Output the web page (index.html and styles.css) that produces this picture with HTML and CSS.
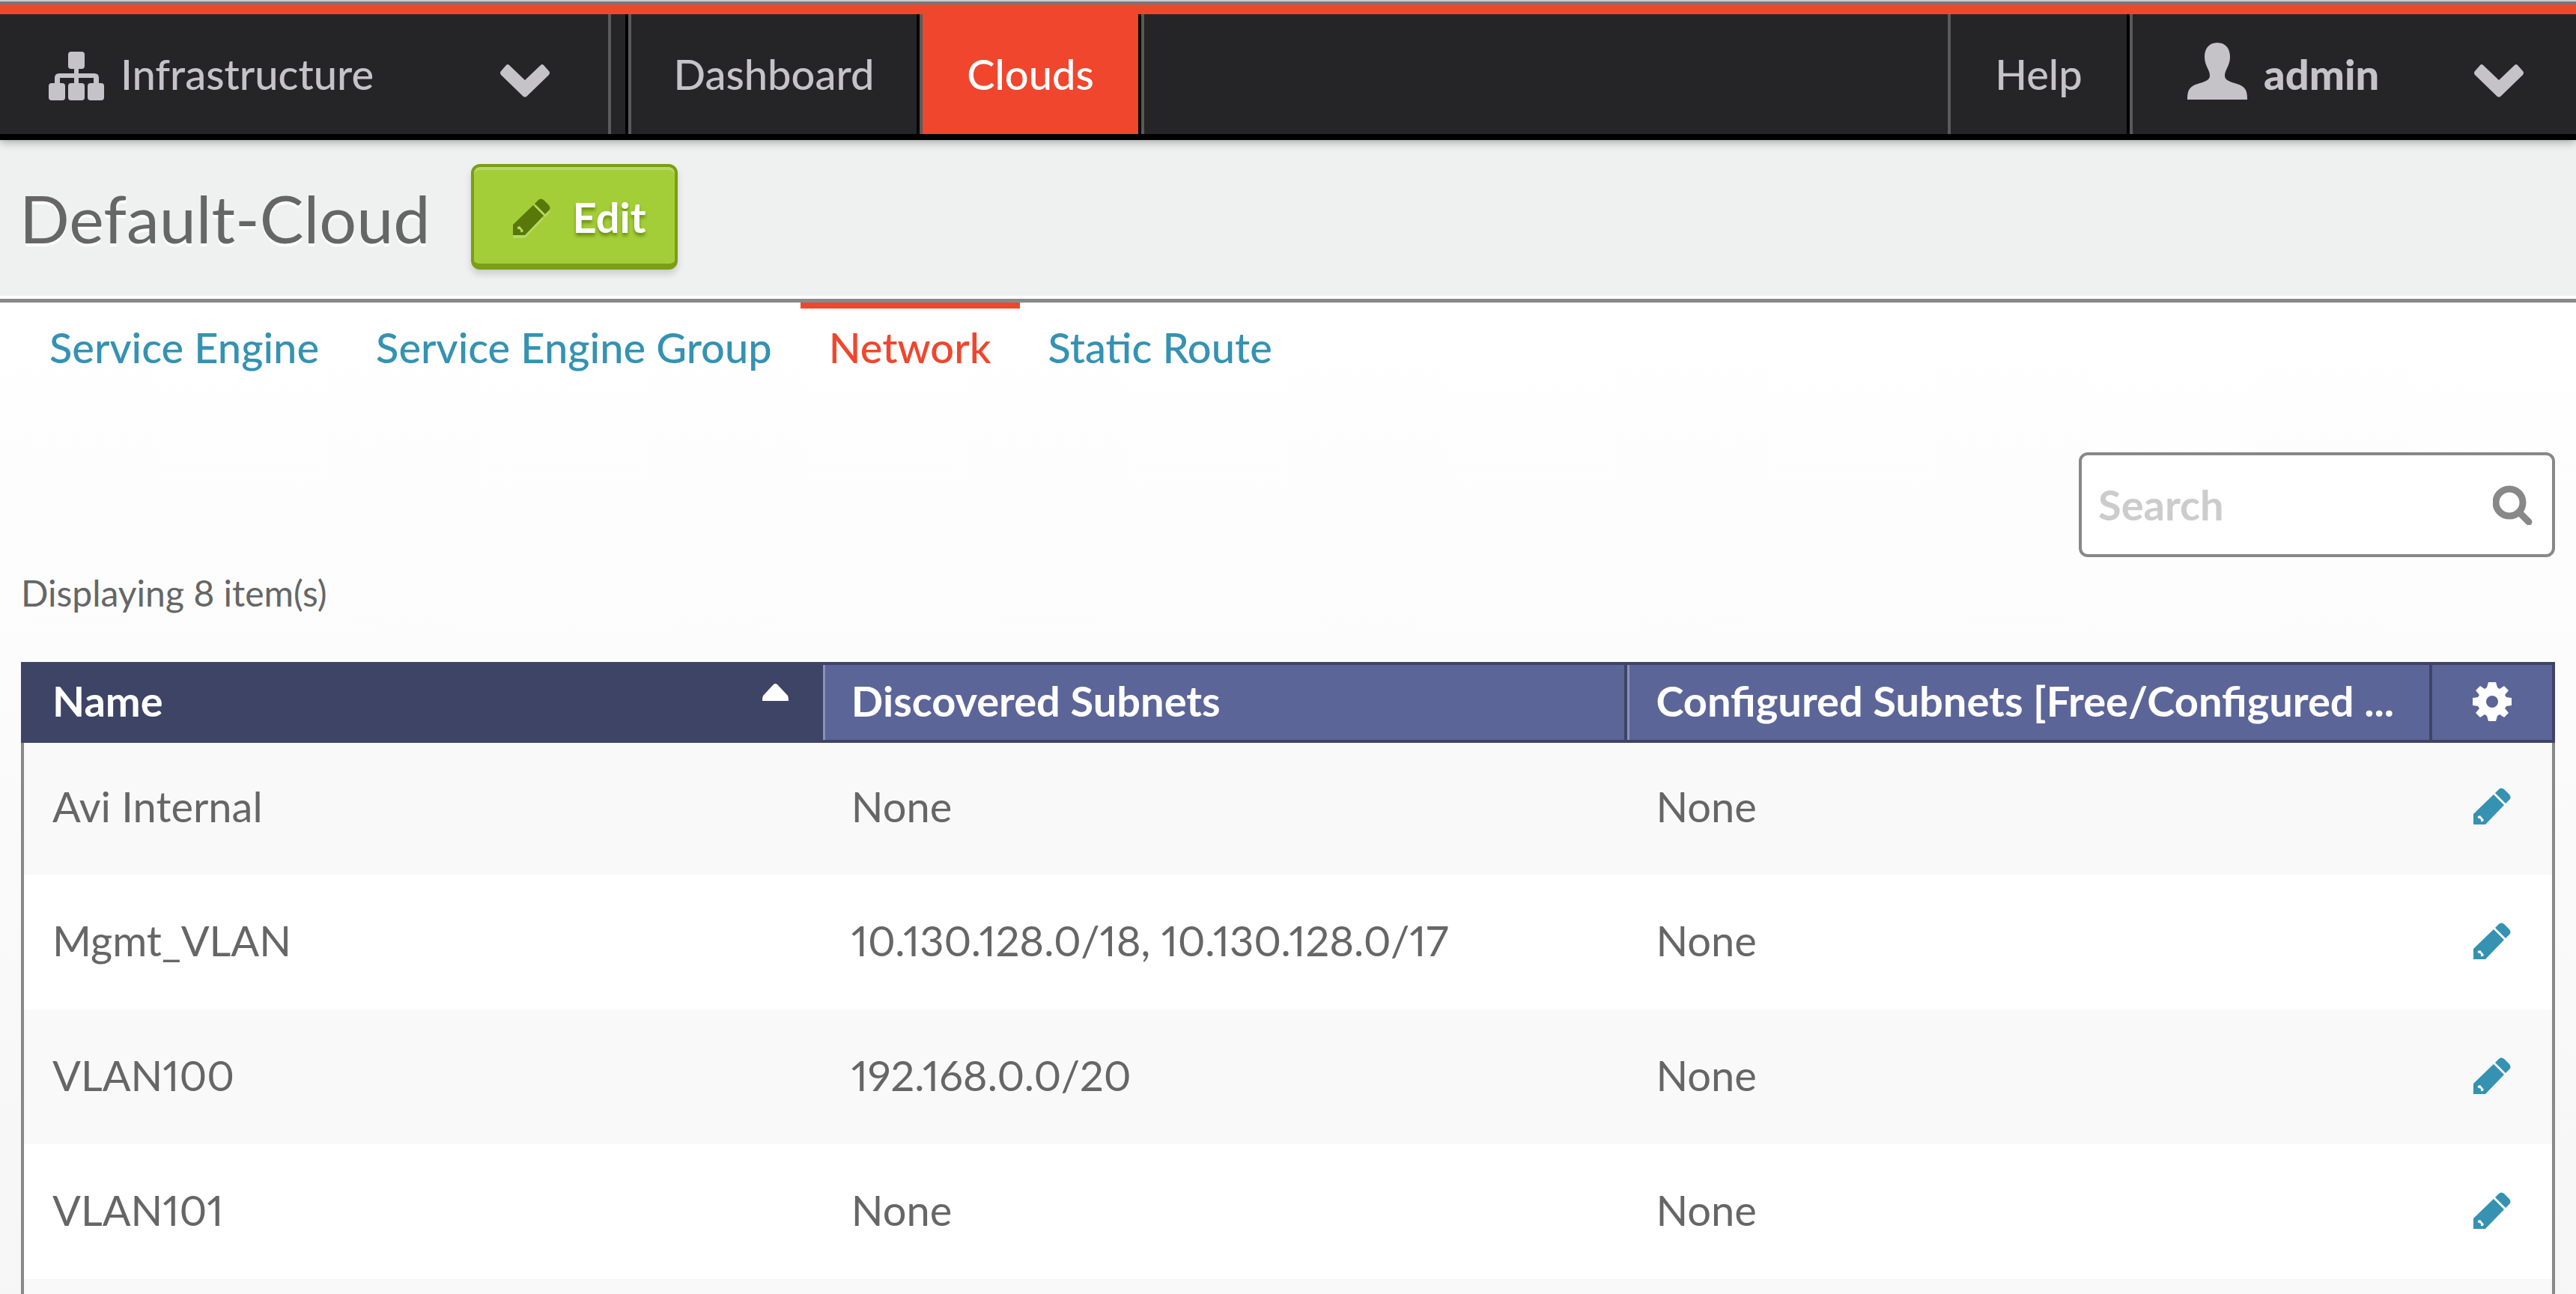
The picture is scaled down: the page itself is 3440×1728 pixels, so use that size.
FILE: index.html
```html
<!DOCTYPE html>
<html lang="en">
<head>
<meta charset="utf-8">
<title>Default-Cloud</title>
<link rel="stylesheet" href="styles.css">
</head>
<body>
<svg class="sprite" aria-hidden="true">
  <symbol id="chevron" viewBox="0 0 68 45"><path d="M2 10 L9 2 Q11 0 13 2 L34 22 L55 2 Q57 0 59 2 L66 10 Q68 12 66 15 L36 44 Q34 45 32 44 L2 15 Q0 12 2 10Z"/></symbol>
  <symbol id="pencil" viewBox="0 0 50 50"><path fill-rule="evenodd" d="M0 35 L27 9 L41 23 L16 49 H0Z M6 38 Q5 41 8 41 L10 42 V45 Q13 46 14 43 L9 37Z"/><path d="M29 7 L34 2 Q37 -1 41 2 L48 9 Q51 13 48 16 L43 21Z"/></symbol>
</svg>
<header class="topbar">
  <button class="section-menu" type="button">
    <svg class="icon-sitemap" viewBox="0 0 74 65" aria-hidden="true"><rect x="26" width="22" height="23" rx="4"/><rect y="42" width="22" height="23" rx="4"/><rect x="26" y="42" width="22" height="23" rx="4"/><rect x="52" y="42" width="22" height="23" rx="4"/><path d="M34 20h6v9h21q6 0 6 6v9h-7v-9H40v9h-6v-9H15v9H8v-9q0-6 6-6h20z"/></svg>
    <span>Infrastructure</span>
    <svg class="icon-chevron" aria-hidden="true"><use href="#chevron"/></svg>
  </button>
  <nav class="nav">
    <a class="nav-item dashboard" href="#">Dashboard</a>
    <a class="nav-item clouds active" href="#">Clouds</a>
  </nav>
  <a class="nav-item help" href="#">Help</a>
  <button class="user-menu" type="button">
    <svg class="icon-user" viewBox="0 0 80 76" aria-hidden="true"><path d="M40 0C52 0 57 9 57 19C57 31 50 36 50 44C50 53 65 53 73 58C79 62 80 67 80 76H0C0 67 1 62 7 58C15 53 30 53 30 44C30 36 23 31 23 19C23 9 28 0 40 0Z"/></svg>
    <span>admin</span>
    <svg class="icon-chevron" aria-hidden="true"><use href="#chevron"/></svg>
  </button>
</header>
<section class="page-head">
  <h1>Default-Cloud</h1>
  <button class="edit-button" type="button"><svg class="icon-pencil" aria-hidden="true"><use href="#pencil"/></svg>Edit</button>
</section>
<main class="content">
  <nav class="tabs">
    <a class="tab" href="#">Service Engine</a>
    <a class="tab" href="#">Service Engine Group</a>
    <a class="tab current" href="#">Network</a>
    <a class="tab" href="#">Static Route</a>
  </nav>
  <div class="tools">
    <label class="search">
      <input type="search" placeholder="Search" aria-label="Search">
      <svg class="icon-search" viewBox="0 0 53 53" aria-hidden="true"><circle cx="22" cy="23" r="18"/><path d="M35 36 L48 49"/></svg>
    </label>
  </div>
  <p class="count">Displaying 8 item(s)</p>
  <table class="grid">
    <colgroup><col class="col-name"><col><col><col class="col-action"></colgroup>
    <thead>
      <tr>
        <th class="sorted" scope="col"><div class="head-cell">Name<svg class="icon-sort" viewBox="0 0 35 24" aria-hidden="true"><path d="M15 2Q17 0 20 2L34 17Q35 19 35 24H0Q0 19 1 17Z"/></svg></div></th>
        <th scope="col">Discovered Subnets</th>
        <th scope="col">Configured Subnets [Free/Configured ...</th>
        <th class="action" scope="col"><button class="icon-button" type="button" aria-label="Table settings"><svg class="icon-gear" viewBox="-26 -26 52 52" aria-hidden="true"><path fill-rule="evenodd" d="M-5 -26H5L7 -19L10 -17L16 -21L22 -15L17 -9L19 -6L26 -5V5L19 6L17 9L22 15L16 21L10 17L7 19L5 26H-5L-7 19L-10 17L-16 21L-22 15L-17 9L-19 6L-26 5V-5L-19 -6L-17 -9L-22 -15L-16 -21L-10 -17L-7 -19Z M0 -8A8 8 0 1 0 0 8A8 8 0 1 0 0 -8Z"/></svg></button></th>
      </tr>
    </thead>
    <tbody>
      <tr><td>Avi Internal</td><td>None</td><td>None</td><td class="action"><button class="icon-button" type="button" aria-label="Edit"><svg class="icon-pencil" aria-hidden="true"><use href="#pencil"/></svg></button></td></tr>
      <tr><td>Mgmt_VLAN</td><td>10.130.128.0/18, 10.130.128.0/17</td><td>None</td><td class="action"><button class="icon-button" type="button" aria-label="Edit"><svg class="icon-pencil" aria-hidden="true"><use href="#pencil"/></svg></button></td></tr>
      <tr><td>VLAN100</td><td>192.168.0.0/20</td><td>None</td><td class="action"><button class="icon-button" type="button" aria-label="Edit"><svg class="icon-pencil" aria-hidden="true"><use href="#pencil"/></svg></button></td></tr>
      <tr><td>VLAN101</td><td>None</td><td>None</td><td class="action"><button class="icon-button" type="button" aria-label="Edit"><svg class="icon-pencil" aria-hidden="true"><use href="#pencil"/></svg></button></td></tr>
      <tr class="spacer"><td></td><td></td><td></td><td></td></tr>
    </tbody>
  </table>
</main>
</body>
</html>
```

FILE: styles.css
```css
* { box-sizing: border-box; }

body {
  margin: 0;
  font-family: Lato, "Liberation Sans", sans-serif;
  font-size: 56px;
  line-height: 68px;
  font-variant-numeric: proportional-nums;
  color: #666;
  background: #fff;
}

a { text-decoration: none; }

button {
  margin: 0;
  padding: 0;
  border: 0;
  background: none;
  font: inherit;
  color: inherit;
  cursor: pointer;
}

svg { display: block; flex: none; fill: currentColor; }
.sprite { position: absolute; width: 0; height: 0; }

/* Top bar */
.topbar {
  position: relative;
  display: flex;
  height: 187px;
  border-top: 19px solid #f0462e;
  border-bottom: 8px solid #000;
  background: #252527;
  color: #c5c3c8;
  font-weight: 500;
  box-shadow: 0 2px 12px rgba(0, 0, 0, .35);
}
.topbar::before {
  content: "";
  position: absolute;
  top: -19px;
  left: 0;
  right: 0;
  height: 4px;
  border-top: 2px solid #ccc;
  background: #777;
}
.section-menu {
  display: flex;
  align-items: center;
  width: 816px;
  padding: 0 77px 0 65px;
  border-right: 4px solid #5a5a5c;
}
.section-menu span,
.user-menu span { margin-left: 22px; }
.icon-chevron { width: 68px; height: 45px; margin: 16px 0 0 auto; }
.icon-sitemap { width: 74px; height: 65px; margin-top: 4px; }
.nav {
  display: flex;
  flex: 1;
  margin-left: 19px;
  border-left: 4px solid #000;
}
.nav::after { content: ""; border-left: 4px solid #5a5a5c; }
.nav-item {
  display: flex;
  align-items: center;
  justify-content: center;
  border-left: 4px solid #5a5a5c;
  border-right: 4px solid #000;
  color: inherit;
}
.dashboard { width: 389px; }
.clouds { width: 296px; }
.help { width: 243px; }
.nav-item.active { background: #f0462e; color: #fff; }
.user-menu {
  display: flex;
  align-items: center;
  width: 596px;
  padding: 0 69px 0 73px;
  border-left: 4px solid #5a5a5c;
  font-weight: 900;
}
.icon-user { width: 80px; height: 76px; margin-bottom: 8px; }

/* Page heading */
.page-head {
  display: flex;
  align-items: center;
  gap: 54px;
  height: 217px;
  padding: 0 26px 4px;
  background: #eff1f1;
  border-bottom: 5px solid #888;
  box-shadow: inset 0 -4px #fff;
}
h1 {
  margin: 0;
  font-size: 88px;
  line-height: 106px;
  font-weight: 400;
  text-shadow: 0 4px #fff;
}
.edit-button {
  display: flex;
  align-items: center;
  gap: 30px;
  width: 276px;
  height: 141px;
  margin-bottom: 4px;
  padding: 6px 0 0 52px;
  border: 4px solid #7a9f14;
  border-bottom-width: 8px;
  border-radius: 12px;
  background: #a3ce38;
  box-shadow: inset 0 4px #b7d866, 0 6px 10px rgba(0, 0, 0, .15);
  color: #fff;
  font-weight: 700;
  text-shadow: 0 4px 4px #6c8f14;
}
.icon-pencil { width: 50px; height: 50px; }
.edit-button .icon-pencil { color: #59780a; filter: drop-shadow(0 4px #b7d866); }

/* Tabs, search and table */
.content {
  padding: 0 28px;
  background: linear-gradient(#fff, #f6f6f6 1324px);
}
.tabs { display: flex; }
.tab {
  padding: 18px 38px 14px;
  border-top: 8px solid transparent;
  color: #3592b2;
  font-weight: 500;
}
.tab.current { border-color: #f0462e; color: #f0462e; }
.tools { display: flex; justify-content: flex-end; margin-top: 92px; }
.search {
  display: flex;
  align-items: center;
  width: 636px;
  height: 140px;
  padding: 0 26px 0 22px;
  border: 4px solid #888;
  border-radius: 12px;
  background: #fff;
}
.search input {
  flex: 1;
  min-width: 0;
  padding: 0;
  border: 0;
  outline: 0;
  background: none;
  font: inherit;
  font-weight: 700;
  color: #666;
}
.search input::placeholder { color: #ccc; opacity: 1; }
.icon-search {
  width: 53px;
  height: 53px;
  fill: none;
  stroke: #888;
  stroke-width: 9;
  stroke-linecap: round;
}
.count { margin: 18px 0 62px; font-size: 48px; line-height: 60px; }

.grid {
  width: 100%;
  table-layout: fixed;
  border-spacing: 0;
  border: solid #888;
  border-width: 0 4px;
}
.col-name { width: 31.6%; }
.col-action { width: 160px; }
.grid thead { box-shadow: -4px 0 #3d4466, 4px 0 #3d4466; }
.grid th {
  height: 108px;
  padding: 0 38px 4px;
  border: solid #3d4466;
  border-width: 4px 4px 4px 0;
  background: #5c6598;
  box-shadow: inset 3px 0 #8b92b8;
  color: #fff;
  font-weight: 700;
  text-align: left;
  white-space: nowrap;
  overflow: hidden;
}
.grid th.sorted { padding-right: 42px; background: #3d4466; box-shadow: none; }
.head-cell { display: flex; justify-content: space-between; }
.icon-sort { width: 35px; height: 24px; margin-top: 10px; }
.grid td { height: 180px; padding: 0 38px 4px; background: #fff; }
.grid tr:nth-child(odd) td { background: #f9f9f9; }
.grid tr:first-child td { height: 176px; padding-bottom: 6px; }
.grid .spacer td { height: 20px; padding: 0; }
.grid .action { padding: 0 0 2px; color: #3592b2; }
.grid th.action { color: #fff; border-right: 0; box-shadow: none; }
.icon-button { display: flex; justify-content: center; width: 100%; }
.icon-gear { width: 52px; height: 52px; }
```
